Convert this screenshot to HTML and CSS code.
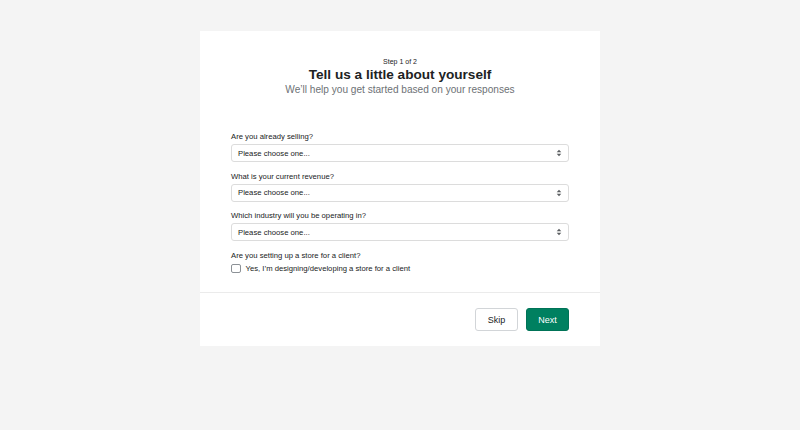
FILE: index.html
```html
<!DOCTYPE html>
<html lang="en">
<head>
<meta charset="utf-8">
<title>Tell us a little about yourself</title>
<link rel="stylesheet" href="styles.css">
</head>
<body>
<div class="card">
  <div class="card-body">
    <header class="head">
      <div class="step">Step 1 of 2</div>
      <h1 class="title">Tell us a little about yourself</h1>
      <p class="subtitle">We’ll help you get started based on your responses</p>
    </header>
    <form class="form">
      <div class="field">
        <label class="label">Are you already selling?</label>
        <div class="select"><span>Please choose one...</span>
          <svg class="caret" width="6" height="8" viewBox="0 0 6 8"><path d="M3 0.8 L5.3 3.2 H0.7 Z M3 7.2 L0.7 4.8 H5.3 Z" fill="#5c5f62"/></svg>
        </div>
      </div>
      <div class="field">
        <label class="label">What is your current revenue?</label>
        <div class="select"><span>Please choose one...</span>
          <svg class="caret" width="6" height="8" viewBox="0 0 6 8"><path d="M3 0.8 L5.3 3.2 H0.7 Z M3 7.2 L0.7 4.8 H5.3 Z" fill="#5c5f62"/></svg>
        </div>
      </div>
      <div class="field">
        <label class="label">Which industry will you be operating in?</label>
        <div class="select"><span>Please choose one...</span>
          <svg class="caret" width="6" height="8" viewBox="0 0 6 8"><path d="M3 0.8 L5.3 3.2 H0.7 Z M3 7.2 L0.7 4.8 H5.3 Z" fill="#5c5f62"/></svg>
        </div>
      </div>
      <div class="field field-check">
        <label class="label">Are you setting up a store for a client?</label>
        <label class="check"><span class="box"></span><span>Yes, I’m designing/developing a store for a client</span></label>
      </div>
    </form>
  </div>
  <footer class="card-foot">
    <button class="btn" type="button">Skip</button>
    <button class="btn primary" type="button">Next</button>
  </footer>
</div>
</body>
</html>
```
FILE: styles.css
```css
* { box-sizing: border-box; }
body {
  margin: 0;
  background: #f4f4f4;
  font-family: "Liberation Sans", Arial, sans-serif;
  color: #202223;
}
.card {
  width: 400px;
  margin: 31px auto 0;
  background: #fff;
}
.card-body {
  padding: 26px 31px 18.5px;
}
.head {
  text-align: center;
}
.step {
  font-size: 7px;
  line-height: 10px;
  color: #202223;
}
.title {
  margin: 0;
  font-size: 13.6px;
  line-height: 16px;
  font-weight: 700;
}
.subtitle {
  margin: 0;
  font-size: 10.1px;
  line-height: 14px;
  color: #6d7175;
}
.form {
  margin-top: 35px;
  display: flex;
  flex-direction: column;
  gap: 9.5px;
}
.field {
  display: flex;
  flex-direction: column;
  gap: 2px;
}
.field-check { gap: 3px; }
.label {
  font-size: 7.7px;
  line-height: 10px;
  color: #202223;
}
.select {
  height: 18px;
  border: 1px solid #dcdcdc;
  border-radius: 3px;
  display: flex;
  align-items: center;
  justify-content: space-between;
  padding: 0 6px 0 6px;
  font-size: 7.7px;
  color: #202223;
}
.caret { display: block; }
.check {
  display: flex;
  align-items: center;
  gap: 5px;
  font-size: 7.7px;
  line-height: 10px;
}
.box {
  width: 9.5px;
  height: 9.5px;
  border: 1px solid #8c9196;
  border-radius: 2px;
}
.card-foot {
  border-top: 1px solid #ebebeb;
  padding: 15px 31px 15px;
  display: flex;
  justify-content: flex-end;
  gap: 8px;
}
.btn {
  height: 23px;
  width: 43px;
  border: 1px solid #d2d5d8;
  border-radius: 3px;
  background: #fff;
  font-family: inherit;
  font-size: 9px;
  color: #202223;
  padding: 0;
}
.btn.primary {
  background: #008060;
  border-color: #007357;
  color: #fff;
}
```
